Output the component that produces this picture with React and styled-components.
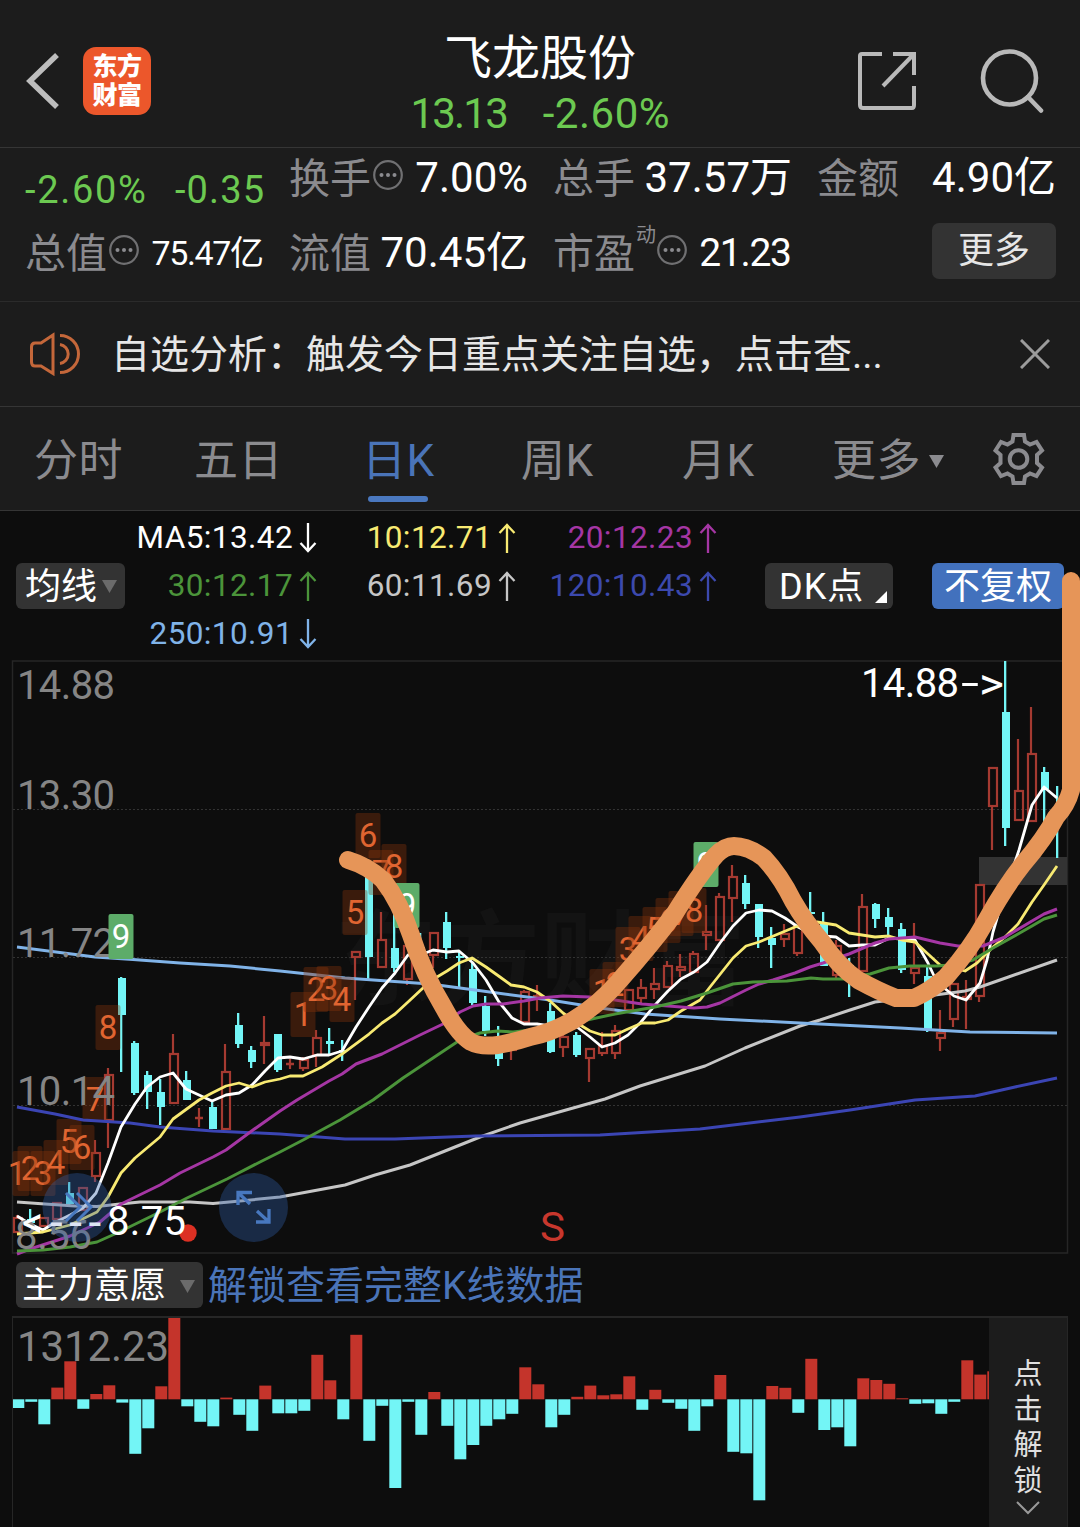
import React from 'react';
import styled, { createGlobalStyle } from 'styled-components';

const Global = createGlobalStyle`
  * { box-sizing: border-box; }
  body { margin: 0; background: #0d0d0d; }
`;

const FONT = 'Roboto, "Noto Sans CJK SC", sans-serif';

const Screen = styled.main`
  position: relative;
  width: 1080px;
  height: 1527px;
  overflow: hidden;
  background: #0d0d0d;
  color: #fff;
  font-family: ${FONT};
  display: flex;
  flex-direction: column;
`;

const Header = styled.header`
  flex: none;
  height: 148px;
  padding: 0 35px 0 26px;
  display: grid;
  grid-template-columns: 323px 1fr 314px;
  background: #1c1c1c;
  border-bottom: 1px solid #353535;
`;

const HeaderLeft = styled.div`
  display: flex;
  align-items: center;
  gap: 23px;
  padding-top: 14px;
`;

const HeaderRight = styled.div`
  display: flex;
  align-items: center;
  justify-content: flex-end;
  gap: 62px;
  padding-top: 13px;
`;

const Logo = styled.div`
  width: 68px;
  height: 68px;
  padding-bottom: 3px;
  border-radius: 13px;
  background: #ec572b;
  display: flex;
  flex-direction: column;
  justify-content: center;
  align-items: center;
  font: 900 25px/29px "Noto Sans CJK SC", sans-serif;
  letter-spacing: -0.5px;
`;

const TitleBlock = styled.div`
  display: flex;
  flex-direction: column;
  align-items: center;
  padding-top: 29px;
`;

const Title = styled.h1`
  margin: 0 0 -5px;
  font-size: 48px;
  line-height: 60px;
  font-weight: 400;
  white-space: nowrap;
`;

const TitleQuote = styled.div`
  display: flex;
  gap: 34px;
  color: #6cc951;
  white-space: nowrap;
`;

const Quote = styled.section`
  flex: none;
  height: 154px;
  padding: 0 24px 0 25px;
  background: #1c1c1c;
  border-bottom: 1px solid #2b2b2b;
  display: grid;
  grid-template-columns: repeat(4, 239px);
  grid-template-rows: 60px 60px;
  column-gap: 25px;
  row-gap: 14px;
`;

const Cell = styled.div`
  display: flex;
  align-items: center;
  justify-content: space-between;
  height: 60px;
  padding-top: ${(p) => p.$drop || 0}px;
  white-space: nowrap;
`;

const Label = styled.span`
  display: flex;
  align-items: center;
  color: #8b8b8f;
  font-size: 41px;
  line-height: 60px;
  padding-top: 1px;
`;

const Sup = styled.sup`
  font-size: 20px;
  line-height: 20px;
  align-self: flex-start;
  margin-top: 1px;
  width: 22px;
  padding-left: 1px;
`;

const Value = styled.span`
  font-size: ${(p) => p.$size || 42}px;
  line-height: 60px;
  letter-spacing: ${(p) => p.$ls || 0}px;
  margin-right: ${(p) => -(p.$ls || 0)}px;
  color: ${(p) => p.$color || 'inherit'};
`;

const MoreButton = styled.button`
  justify-self: end;
  width: 124px;
  height: 56px;
  margin-top: 1px;
  padding: 0;
  border: 0;
  border-radius: 7px;
  background: #333;
  color: #e6e6e6;
  font: 400 36px/50px ${FONT};
`;

const Notice = styled.section`
  flex: none;
  height: 105px;
  padding: 0 29px;
  display: flex;
  align-items: center;
  background: #1c1c1c;
  border-bottom: 1px solid #353535;
`;

const NoticeText = styled.p`
  flex: 1;
  margin: 0 0 0 30px;
  padding-top: 2px;
  font-size: 39px;
  line-height: 60px;
  color: #e6e6e6;
  white-space: nowrap;
`;

const Tabs = styled.nav`
  flex: none;
  height: 104px;
  padding: 0 35px 0 34px;
  display: grid;
  grid-template-columns: 160px 168px 159px 161px 150px 1fr auto;
  align-items: center;
  background: #1c1c1c;
  border-bottom: 1px solid #353535;
`;

const Tab = styled.a`
  height: 103px;
  display: flex;
  flex-direction: column;
  padding-top: 23px;
  font-size: 44px;
  line-height: 62px;
  letter-spacing: 0.5px;
  white-space: nowrap;
  color: ${(p) => (p.$active ? '#4a74b8' : '#8b8b8f')};
  &::after {
    content: '';
    display: ${(p) => (p.$active ? 'block' : 'none')};
    width: 60px;
    height: 6px;
    margin: 4px 0 0 6px;
    border-radius: 3px;
    background: #4a78bf;
  }
`;

const TabMore = styled.span`
  display: flex;
  align-items: center;
  gap: 8px;
`;

const Legend = styled.section`
  flex: none;
  height: 149px;
  padding: 0 16px;
  display: flex;
  align-items: center;
`;

const Chip = styled.button`
  flex: none;
  width: ${(p) => p.$w}px;
  height: 46px;
  margin-left: ${(p) => p.$ml || 0}px;
  padding: 2px ${(p) => p.$pr || 8}px 0 ${(p) => p.$pl || 9}px;
  border: 0;
  border-radius: 6px;
  display: flex;
  align-items: center;
  justify-content: space-between;
  background: ${(p) => (p.$blue ? '#4271bd' : '#333')};
  color: #fff;
  font: 400 36px/44px ${FONT};
  letter-spacing: ${(p) => p.$ls || 0}px;
  white-space: nowrap;
`;

const MaGrid = styled.div`
  display: grid;
  grid-template-columns: 192px 199px 201px;
  grid-auto-rows: 48px;
  margin-top: 1px;
`;

const Ma = styled.div`
  display: flex;
  align-items: center;
  justify-content: flex-end;
  gap: 6px;
  font-size: 31.5px;
  line-height: 48px;
  letter-spacing: 0.4px;
  white-space: nowrap;
  color: ${(p) => p.$color};
`;

const ChartPanel = styled.section`
  flex: none;
  height: 594px;
`;

const SubHead = styled.div`
  flex: none;
  height: 62px;
  padding: 0 16px 0;
  display: flex;
  align-items: center;
  gap: 6px;
`;

const UnlockLink = styled.a`
  font-size: 39px;
  line-height: 56px;
  padding-top: 2px;
  margin-left: -1px;
  color: #4a74b8;
  white-space: nowrap;
`;

const Volume = styled.section`
  flex: 1;
  margin: 0 12px;
  width: 1056px;
  display: flex;
  border: 2px solid #262626;
  border-width: 2px 1px 0 1px;
`;

const Unlock = styled.aside`
  flex: 1;
  background: #1c1c1c;
  display: flex;
  flex-direction: column;
  align-items: center;
  padding-top: 39px;
  font-size: 29px;
  line-height: 35.6px;
  color: #e0e0e0;
`;

const Scribble = styled.svg`
  position: absolute;
  left: 0;
  top: 0;
  pointer-events: none;
`;

const DotsSvg = styled.svg`
  margin-bottom: 7px;
`;

const CloseSvg = styled.svg`
  margin-right: 1px;
`;

const CornerSvg = styled.svg`
  align-self: flex-end;
  margin-bottom: 6px;
`;

const ChevronSvg = styled.svg`
  margin-top: 2px;
`;

const ChartSvg = styled.svg`
  display: block;
  overflow: visible;
`;

const BackIcon = () => (
  <svg width="34" height="56" viewBox="0 0 34 56" fill="none" stroke="#bdbdbd" strokeWidth="5.5">
    <path d="M31 2 L4 28 L31 54" />
  </svg>
);

const ShareIcon = () => (
  <svg width="60" height="60" viewBox="0 0 60 60" fill="none" stroke="#b9b9b9" strokeWidth="4">
    <path d="M25 4 H5 Q3 4 3 6 V55 Q3 58 6 58 H55 Q57 58 57 55 V36" />
    <path d="M36 4 H57 V25" />
    <path d="M57 4 L26 36" />
  </svg>
);

const SearchIcon = () => (
  <svg width="66" height="66" viewBox="0 0 66 66" fill="none" stroke="#b9b9b9" strokeWidth="4.6">
    <circle cx="30.500" cy="31" r="26.500" />
    <path d="M49 50 L62 63.500" strokeLinecap="round" />
  </svg>
);

const Dots = ({ gap = 2 }) => (
  <DotsSvg width={30 + gap} height="30" viewBox={`${-gap} 0 ${30 + gap} 30`}>
    <circle cx="15" cy="15" r="13.8" fill="none" stroke="#707072" strokeWidth="2.2" />
    <g fill="#8b8b8f">
      <circle cx="8.500" cy="15" r="2" />
      <circle cx="15" cy="15" r="2" />
      <circle cx="21.500" cy="15" r="2" />
    </g>
  </DotsSvg>
);

const Speaker = () => (
  <svg width="52" height="44" viewBox="0 0 52 44" fill="none" stroke="#c4673a" strokeWidth="3">
    <path d="M24 3 L12 11 H6 Q2.500 11 2.500 15 V30 Q2.500 34 6 34 H12 L24 41.500 Z" />
    <path d="M31 3.500 A18.500 18.500 0 0 1 31 40.500" />
    <path d="M31 12.500 A9.600 9.600 0 0 1 31 31.500" />
  </svg>
);

const Close = () => (
  <CloseSvg width="30" height="30" viewBox="0 0 30 30" stroke="#9c9c9c" strokeWidth="3">
    <path d="M1 1 L29 29 M29 1 L1 29" />
  </CloseSvg>
);

const Gear = () => (
  <svg width="52" height="52" viewBox="0 0 52 52" fill="none" stroke="#8b8b8f" strokeWidth="4">
    <path d="M20.500 2 H31 L32 8.500 L37 11.500 L43.500 9 L49 17.500 L44 22 V30 L49 34.500 L43.500 43 L37 40.500 L32 43.500 L31 50 H20.500 L19.500 43.500 L14.500 40.500 L8 43 L2.500 34.500 L7.500 30 V22 L2.500 17.500 L8 9 L14.500 11.500 L19.500 8.500 Z" />
    <circle cx="25.500" cy="26" r="8.800" />
  </svg>
);

const Caret = ({ color = '#6b6b6b', w = 15 }) => (
  <svg width={w} height="13" viewBox="0 0 15 13"><path d="M0 0 H15 L7.500 13 Z" fill={color} /></svg>
);

const Arrow = ({ up }) => (
  <svg width="18" height="30" viewBox="0 0 18 30" fill="none" stroke="currentColor" strokeWidth="2.3">
    <path d={up ? 'M9 30 V2 M1.500 10 L9 2 L16.500 10' : 'M9 0 V28 M1.500 20 L9 28 L16.500 20'} />
  </svg>
);

const MA_ITEMS = [
  ['MA5:13.42', false, '#fff'], ['10:12.71', true, '#f8ea72'], ['20:12.23', true, '#a536a4'],
  ['30:12.17', true, '#4b943a'], ['60:11.69', true, '#c6c6c6'], ['120:10.43', true, '#3c49ae'],
  ['250:10.91', false, '#80b3e8'],
];

// [kind, high, bodyTop, bodyBottom, low]; r = rising (hollow), c = falling (filled)
const CANDLES = [
  ['r', 1215, 1218, 1232, 1233], ['c', 1209, 1219, 1223, 1224], ['r', 1217, 1218, 1226, 1227], ['r', 1202, 1203, 1219, 1219],
  ['c', 1182, 1193, 1204, 1205], ['r', 1187, 1188, 1210, 1211], ['r', 1140, 1153, 1176, 1182], ['r', 1068, 1075, 1120, 1148],
  ['c', 977, 978, 1015, 1072], ['c', 1041, 1043, 1093, 1095], ['c', 1071, 1075, 1092, 1109], ['c', 1079, 1092, 1107, 1125],
  ['r', 1034, 1054, 1103, 1103], ['c', 1071, 1080, 1100, 1100], ['r', 1108, 1118, 1118, 1127], ['c', 1101, 1107, 1129, 1129],
  ['r', 1044, 1072, 1129, 1129], ['c', 1013, 1025, 1044, 1048], ['c', 1046, 1050, 1062, 1068], ['r', 1016, 1043, 1045, 1064],
  ['c', 1034, 1034, 1070, 1072], ['r', 1059, 1064, 1064, 1069], ['r', 1057, 1060, 1068, 1071], ['r', 1030, 1038, 1055, 1067],
  ['c', 1028, 1041, 1044, 1055], ['c', 1040, 1050, 1052, 1061], ['r', 951, 952, 957, 1000], ['c', 870, 872, 957, 979],
  ['r', 912, 940, 967, 968], ['c', 900, 948, 968, 972], ['r', 944, 946, 979, 985], ['c', 933, 947, 965, 966],
  ['r', 932, 933, 955, 968], ['c', 912, 922, 948, 959], ['c', 952, 956, 958, 987], ['c', 962, 969, 1003, 1005],
  ['c', 996, 1006, 1031, 1036], ['c', 1026, 1037, 1059, 1066], ['r', 1040, 1041, 1050, 1060], ['r', 990, 992, 1022, 1023],
  ['r', 985, 996, 998, 1011], ['c', 1003, 1011, 1052, 1053], ['r', 1032, 1037, 1047, 1057], ['c', 1032, 1035, 1055, 1057],
  ['r', 1048, 1049, 1058, 1082], ['r', 1032, 1046, 1053, 1056], ['r', 1025, 1031, 1053, 1059], ['r', 989, 990, 1010, 1010],
  ['r', 979, 988, 998, 1003], ['r', 968, 984, 989, 999], ['r', 961, 966, 987, 988], ['r', 954, 967, 970, 977],
  ['r', 951, 954, 972, 972], ['r', 905, 932, 935, 950], ['r', 893, 897, 940, 940], ['r', 865, 877, 898, 922],
  ['c', 875, 883, 904, 909], ['c', 904, 904, 937, 948], ['c', 927, 938, 945, 968], ['r', 924, 934, 939, 947],
  ['r', 925, 926, 953, 956], ['c', 892, 912, 914, 920], ['c', 912, 924, 966, 966], ['r', 940, 946, 975, 978],
  ['c', 958, 965, 980, 997], ['r', 894, 907, 971, 972], ['c', 903, 904, 919, 928], ['c', 908, 917, 927, 937],
  ['c', 923, 929, 970, 973], ['r', 923, 968, 973, 984], ['c', 967, 976, 1029, 1032], ['r', 1010, 1033, 1038, 1051],
  ['r', 983, 984, 1019, 1027], ['r', 980, 997, 999, 1029], ['r', 885, 885, 996, 1002], ['r', 768, 768, 806, 850],
  ['c', 661, 712, 828, 846], ['r', 739, 791, 820, 820], ['r', 707, 754, 821, 821], ['c', 767, 772, 789, 822],
  ['c', 786, 806, 822, 858],
];

const LINES = [
  ['#c6c6c6', 3, '17,1202 45,1204 75,1206 97,1206.5 120,1204 140,1202 190,1202 213,1203.5 240,1201 280,1197 345,1185 375,1175 410,1165 445,1151 480,1137 520,1123 605,1099 640,1086 705,1066 745,1048 800,1026 820,1020 850,1010 875,1002 935,995 965,991 980,987 1000,980 1057,960'],
  ['#3b45b4', 3, '17,1107 55,1114 83,1120 130,1123 160,1127 213,1131 280,1134 345,1139 395,1139 475,1136 600,1135 700,1129 800,1117 850,1110 915,1100 975,1096 1015,1087 1057,1078'],
  ['#80b3e8', 3, '17,947 95,957 133,959.5 180,963 230,966 280,971 345,978 430,984 475,990 550,1000 600,1008 645,1014 720,1019 800,1023 900,1028 970,1032 1057,1033'],
  ['#fff', 2.8, '17,1216 30,1224 43,1230 56,1222 70,1215 83,1208 96,1193 108,1163 121,1127 135,1104 147,1087 160,1077 173,1073 186,1089 199,1095 212,1101 226,1095 239,1093 252,1085 265,1071 278,1058 290,1057 303,1059 317,1055 329,1055 342,1051 356,1027 369,1007 382,988 395,973 408,955 423,954 433,950 447,952 459,951 473,963 486,980 499,1002 512,1018 524,1024 537,1024 550,1026 577,1027 590,1037 602,1047 615,1043 628,1035 641,1022 655,1005 668,991 681,979 694,972 707,962 720,943 733,926 746,913 759,910 772,911 785,918 798,927 810,933 823,936 836,937 849,946 862,945 875,945 889,938 902,939 915,940 928,963 935,978 943,987 954,996 966,1000 980,983 987,960 993,932 1003,898 1014,865 1019,850 1032,805 1044,787 1057,798'],
  ['#f8ea72', 2.8, '17,1234 43,1232 70,1225 97,1212 108,1197 121,1173 135,1158 160,1137 173,1119 199,1100 212,1093 226,1086 239,1083 252,1087 265,1082 280,1079 290,1076 303,1076 322,1067 342,1054 369,1034 382,1023 395,1014 408,1002 423,988 437,977 447,971 459,963 472,958 486,967 500,977 511,985 524,987 537,992 550,1001 563,1013 577,1023 590,1031 602,1035 615,1035 628,1029 642,1023 655,1023 668,1020 681,1011 700,1000 710,987 733,958 746,946 759,942 795,927 817,922 836,925 849,933 875,937 889,936 902,940 915,942 928,954 940,965 965,971 977,963 993,947 1005,937 1018,924 1032,902 1044,885 1057,866'],
  ['#a536a4', 3, '17,1254 30,1249 58,1240 70,1236 100,1222 121,1204 160,1185 180,1173 213,1157 226,1150 253,1130 280,1111 297,1100 329,1081 342,1074 356,1064 382,1054 420,1035 443,1024 460,1012 473,1006 486,1004 503,1004 524,1001 540,998 563,996 590,997 615,1000 642,1004 668,1006 694,1008 707,1007 720,1003 746,990 759,984 773,980 795,973 810,967 823,963 849,954 875,943 889,939 915,937 940,943 958,946 983,946 1005,937 1032,921 1044,914 1057,909'],
  ['#4b943a', 3, '17,1251 43,1250 70,1247 97,1242 117,1233 160,1212 187,1198 227,1179 260,1162 280,1152 305,1139 340,1120 373,1100 403,1078 433,1058 460,1040 480,1033 497,1031 513,1032 550,1028 587,1020 615,1014 655,1007 681,1001 707,993 733,984 753,982 787,981 811,978 823,979 843,979 870,974 889,968 910,966 937,966 950,965 973,960 993,948 1018,934 1032,926 1044,919 1057,915'],
];

// [digit, centre x, box top]
const MARKS = [
  [1, 17, 1151], [2, 30, 1146], [3, 43, 1151], [4, 56, 1140], [5, 69, 1119], [6, 82, 1125], [7, 95, 1077], [8, 108, 1005], [9, 121, 914],
  [1, 303, 992], [2, 316, 967], [3, 329, 966], [4, 342, 977], [5, 355, 890], [6, 368, 813], [7, 381, 850], [8, 394, 844], [9, 407, 883],
  [1, 602, 969], [2, 615, 962], [3, 628, 927], [4, 641, 916], [5, 655, 907], [6, 668, 898], [7, 681, 891], [8, 694, 888], [9, 706, 842],
];

const BARS = [-8.7, -2.5, -25, 11.7, 38, -9.5, 5.3, 14, -3.3, -54.5, -29, 13, 82, -7, -22.5, -27, 1.7, -15.5, -31.5, 13.7, -14, -14, -11.5,
  44.5, 19, -20, 64.5, -41.5, -6.5, -88.7, -2.5, -35.5, 7.3, -26.5, -60, -45.7, -26.5, -20, -14.5, 32, 15, -28, -15.5, 2.5, 13.7, 4, 5, 23,
  -10.5, 9.5, -3.5, -9.5, -31.5, -7, 24.3, -52.5, -54, -101, 13.3, 11.5, -13.5, 40.5, -30.7, -28, -47, 21, 19.3, 15.5, 1, -4.5, -4, -14.5,
  -2.5, 39, 24.7, 28];

const RED = '#a53a31';
const CYAN = '#73f5f6';

const Candle = ({ i, d: [kind, high, top, bottom, low] }) => {
  const x = 17 + 13 * i;
  if (kind === 'c') {
    return (
      <g fill={CYAN}>
        <rect x={x - 1} y={high} width="2.300" height={low - high} />
        <rect x={x - 3} y={top} width="8" height={Math.max(bottom - top, 2)} />
      </g>
    );
  }
  return (
    <g fill="none" stroke={RED} strokeWidth="2.200">
      <path d={`M${x} ${high} V${top} M${x} ${bottom} V${low}`} />
      {bottom - top < 2
        ? <path d={`M${x - 4} ${top} H${x + 4}`} strokeWidth="2.5" />
        : <rect x={x - 3} y={top} width="8" height={bottom - top} />}
    </g>
  );
};

const Mark = ({ n, x, y }) => {
  const left = Math.max(x - 12.5, 12.5);
  return (
    <g>
      <rect x={left} y={y} width={x + 12.5 - left} height="45" rx="2" fill={n === 9 ? '#5dac69' : '#8a360b'} fillOpacity={n === 9 ? 1 : 0.36} />
      <text x={x} y={y + 33.5} fontSize="33" textAnchor="middle" fill={n === 9 ? '#fff' : '#e06531'}>{n}</text>
    </g>
  );
};

const Price = ({ x, y, w, color = '#858585', children }) => (
  <text x={x} y={y} fontSize="40" textLength={w} fill={color}>{children}</text>
);

const KChart = () => (
  <ChartSvg width="1080" height="594" viewBox="0 660 1080 594" fontFamily="Roboto, sans-serif">
    <text x="334" y="997" fontFamily="'Noto Sans CJK SC', sans-serif" fontSize="103" fontWeight="700" fill="#131313">东方财富</text>
    <rect x="12.500" y="661" width="1055" height="592" fill="none" stroke="#262626" strokeWidth="1.5" />
    <path d="M13 809.500 H1067 M13 957.500 H1067 M13 1105.500 H1067" stroke="#333" strokeDasharray="2 2" />
    <rect x="979" y="857" width="88" height="28" fill="#333" />
    {CANDLES.map((d, i) => <Candle key={i} i={i} d={d} />)}
    {MARKS.slice(0, 8).map(([n, x, y]) => <Mark key={x} n={n} x={x} y={y} />)}
    {LINES.map(([c, w, pts]) => <polyline key={c} points={pts} fill="none" stroke={c} strokeWidth={w} strokeLinejoin="round" />)}
    <Price x={17} y={699} w={98}>14.88</Price>
    <Price x={17} y={809} w={98}>13.30</Price>
    <Price x={17} y={957} w={98}>11.72</Price>
    <Price x={17} y={1105} w={98}>10.14</Price>
    <Price x={15} y={1249} w={77}>8.56</Price>
    {MARKS.slice(8).map(([n, x, y]) => <Mark key={x} n={n} x={x} y={y} />)}
    <circle cx="77" cy="1207.500" r="34.500" fill="#305ea8" fillOpacity="0.36" />
    <path d="M66 1193 L80 1207 L66 1221 M77 1193 L91 1207 L77 1221" fill="none" stroke="#4878bf" strokeWidth="3" />
    <circle cx="253.500" cy="1207.500" r="34.500" fill="#305ea8" fillOpacity="0.36" />
    <path d="M238 1205 V1192.500 H252 M238 1192.500 L250 1204 M256 1222 H269 V1209 M269 1222 L257 1211" fill="none" stroke="#4878bf" strokeWidth="3.300" />
    <circle cx="188" cy="1233" r="8.700" fill="#dc3023" />
    <text x="22" y="1237" fontSize="42" fill="#fff">&lt;</text>
    <text x="50" y="1238" fontSize="46" letterSpacing="6.5" fill="#dce4f4">---</text>
    <Price x={107} y={1235} w={79} color="#fff">8.75</Price>
    <Price x={861} y={697} w={98} color="#fff">14.88</Price>
    <text x="961" y="697" fontSize="40" textLength="18" lengthAdjust="spacingAndGlyphs" fill="#fff">-</text>
    <text x="979" y="699" fontSize="44" textLength="25" lengthAdjust="spacingAndGlyphs" fill="#fff">&gt;</text>
    <text x="540" y="1241" fontSize="41" textLength="25" lengthAdjust="spacingAndGlyphs" fill="#c8372d">S</text>
  </ChartSvg>
);

const VolumeChart = () => (
  <svg width="976" height="209" viewBox="13 1318 976 209" fontFamily="Roboto, sans-serif" display="block">
    <text x="17" y="1361" fontSize="42" textLength="152" fill="#858585">1312.23</text>
    {BARS.map((v, i) => (
      <rect key={i} x={12.3 + 13 * i} y={v > 0 ? 1399.3 - v : 1399.3} width="12" height={Math.abs(v)} fill={v > 0 ? '#c4342b' : CYAN} />
    ))}
  </svg>
);

export default function App() {
  return (
    <Screen>
      <Global />
      <Header>
        <HeaderLeft>
          <BackIcon />
          <Logo><span>东方</span><span>财富</span></Logo>
        </HeaderLeft>
        <TitleBlock>
          <Title>飞龙股份</Title>
          <TitleQuote><Value $ls={-1.8}>13.13</Value><Value $ls={0.5}>-2.60%</Value></TitleQuote>
        </TitleBlock>
        <HeaderRight><ShareIcon /><SearchIcon /></HeaderRight>
      </Header>

      <Quote>
        <Cell $drop={23}><Value $size={38} $ls={1.7} $color="#6cc951">-2.60%</Value><Value $size={38} $ls={1.1} $color="#6cc951">-0.35</Value></Cell>
        <Cell><Label>换手<Dots /></Label><Value>7.00%</Value></Cell>
        <Cell><Label>总手</Label><Value>37.57万</Value></Cell>
        <Cell><Label>金额</Label><Value>4.90亿</Value></Cell>
        <Cell $drop={2}><Label>总值<Dots /></Label><Value $size={34} $ls={-1.4}>75.47亿</Value></Cell>
        <Cell $drop={2}><Label>流值</Label><Value>70.45亿</Value></Cell>
        <Cell $drop={2}><Label>市盈<Sup>动</Sup><Dots gap={0} /></Label><Value $size={39} $ls={-1.3}>21.23</Value></Cell>
        <MoreButton>更多</MoreButton>
      </Quote>

      <Notice>
        <Speaker />
        <NoticeText>自选分析：触发今日重点关注自选，点击查...</NoticeText>
        <Close />
      </Notice>

      <Tabs>
        <Tab>分时</Tab>
        <Tab>五日</Tab>
        <Tab $active>日K</Tab>
        <Tab>周K</Tab>
        <Tab>月K</Tab>
        <Tab><TabMore>更多<Caret color="#8b8b8f" /></TabMore></Tab>
        <Gear />
      </Tabs>

      <Legend>
        <Chip $w={109}>均线<Caret /></Chip>
        <MaGrid>
          {MA_ITEMS.map(([t, up, c]) => <Ma key={t} $color={c}>{t}<Arrow up={up} /></Ma>)}
        </MaGrid>
        <Chip $w={128} $ml={48} $pl={14} $pr={6} $ls={1}>
          DK点
          <CornerSvg width="12" height="12"><path d="M12 0 V12 H0 Z" fill="#fff" /></CornerSvg>
        </Chip>
        <Chip $w={132} $ml={39} $pl={12} $blue>不复权</Chip>
      </Legend>

      <ChartPanel><KChart /></ChartPanel>

      <SubHead>
        <Chip $w={187} $pl={6}>主力意愿<Caret /></Chip>
        <UnlockLink>解锁查看完整K线数据</UnlockLink>
      </SubHead>

      <Volume>
        <VolumeChart />
        <Unlock>
          <span>点</span><span>击</span><span>解</span><span>锁</span>
          <ChevronSvg width="24" height="14" viewBox="0 0 24 14" fill="none" stroke="#999" strokeWidth="2"><path d="M1 1 L12 12 L23 1" /></ChevronSvg>
        </Unlock>
      </Volume>

      <Scribble width="1080" height="1527" viewBox="0 0 1080 1527">
        <path
          d="M348 860 Q368 866 383 880 Q400 902 411 935 Q424 975 444 1008 Q458 1034 471 1042 Q480 1047 498 1045 Q515 1042 530 1037 Q550 1033 572 1021 Q600 1004 620 980 Q650 946 675 913 Q700 873 716 855 Q725 846 734 846 Q748 846 764 858 Q780 875 793 901 Q805 922 822 942 Q838 966 858 980 Q880 992 896 998 H914 Q930 991 946 977 Q970 950 986 921 Q1004 888 1023 864 Q1045 838 1056 817 Q1067 805 1071 790 V581"
          fill="none" stroke="#e69558" strokeWidth="18" strokeLinecap="round" strokeLinejoin="round"
        />
      </Scribble>
    </Screen>
  );
}
